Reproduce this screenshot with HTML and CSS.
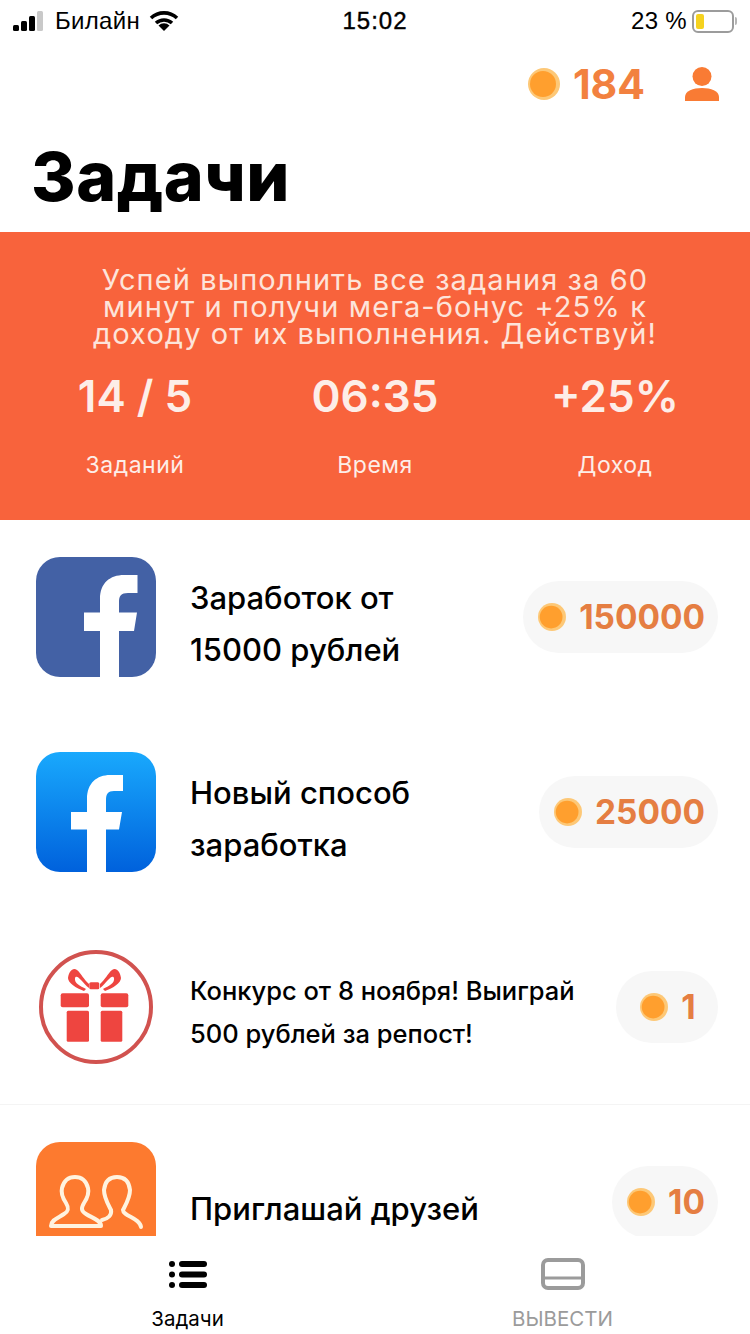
FILE: index.html
```html
<!DOCTYPE html>
<html lang="ru">
<head>
    <meta charset="UTF-8">
    <meta name="viewport" content="width=device-width, initial-scale=1.0">
    <title>Задачи</title>
    <link rel="stylesheet" href="styles.css">
</head>
<body>
    <svg class="defs" width="0" height="0">
        <symbol id="coin" viewBox="0 0 32 32">
            <circle cx="16" cy="16" r="16" fill="#fdc877"/>
            <circle cx="15" cy="16" r="13" fill="#ff9f2e"/>
        </symbol>
    </svg>

    <div class="status-bar">
        <div class="status-left">
            <svg class="signal" width="34" height="22" viewBox="0 0 34 22">
                <rect x="0" y="15" width="6" height="6" rx="1.5" fill="#000"/>
                <rect x="8" y="11" width="6" height="10" rx="1.5" fill="#000"/>
                <rect x="16" y="6" width="6" height="15" rx="1.5" fill="#000"/>
                <rect x="24" y="1" width="6" height="20" rx="1.5" fill="#c9c9c9"/>
            </svg>
            <span>Билайн</span>
            <svg class="wifi" width="30" height="22" viewBox="0 0 30 22">
                <path d="M2 8 A19 19 0 0 1 28 8" fill="none" stroke="#000" stroke-width="3.6"/>
                <path d="M7 13 A12 12 0 0 1 23 13" fill="none" stroke="#000" stroke-width="3.6"/>
                <path d="M15 21 L9.5 15.5 A8 8 0 0 1 20.5 15.5 Z" fill="#000"/>
            </svg>
        </div>
        <div class="status-time">15:02</div>
        <div class="status-right">
            <span>23 %</span>
            <div class="battery"><div class="battery-level"></div></div>
            <div class="battery-nub"></div>
        </div>
    </div>

    <div class="top-row">
        <svg class="coin-big"><use href="#coin"/></svg>
        <span class="balance">184</span>
        <svg class="user-icon" width="36" height="34" viewBox="0 0 36 34">
            <circle cx="18" cy="9.500" r="9.500" fill="#f97b34"/>
            <path d="M1 34 V30 C1 24 9 21 18 21 C27 21 35 24 35 30 V34 Z" fill="#f97b34"/>
        </svg>
    </div>

    <h1 class="page-title">Задачи</h1>

    <div class="banner">
        <p class="banner-text">Успей выполнить все задания за 60 минут и получи мега-бонус +25% к доходу от их выполнения. Действуй!</p>
        <div class="banner-stats">
            <div class="stat">
                <div class="stat-value">14 / 5</div>
                <div class="stat-label">Заданий</div>
            </div>
            <div class="stat">
                <div class="stat-value">06:35</div>
                <div class="stat-label">Время</div>
            </div>
            <div class="stat">
                <div class="stat-value">+25%</div>
                <div class="stat-label">Доход</div>
            </div>
        </div>
    </div>

    <div class="task-list">
        <div class="task">
            <svg class="task-icon" viewBox="0 0 120 120">
                <rect width="120" height="120" rx="24" fill="#4361a5"/>
                <path d="M64 120 V74 H48 V55.500 H64 V42 C64 26 74 18 88 18 H101.500 V36 H92 C85 36 83 39 83 45 V55.500 H101 L98 74 H83 V120 Z" fill="#fff"/>
            </svg>
            <div class="task-title">Заработок от<br>15000 рублей</div>
            <div class="reward">
                <svg class="coin-small"><use href="#coin"/></svg>
                <span>150000</span>
            </div>
        </div>
        <div class="task">
            <svg class="task-icon" viewBox="0 0 120 120">
                <defs>
                    <linearGradient id="fb-blue" x1="0" y1="0" x2="0" y2="1">
                        <stop offset="0" stop-color="#19a9fd"/>
                        <stop offset="1" stop-color="#0061dc"/>
                    </linearGradient>
                </defs>
                <rect width="120" height="120" rx="24" fill="url(#fb-blue)"/>
                <path d="M51 120 V77.500 H35 V60 H51 V47 C51 31 61 23 74 23 H87 V39 H78 C72 39 70 42 70 48 V60 H86 L83 77.500 H70 V120 Z" fill="#fff"/>
            </svg>
            <div class="task-title">Новый способ<br>заработка</div>
            <div class="reward">
                <svg class="coin-small"><use href="#coin"/></svg>
                <span>25000</span>
            </div>
        </div>
        <div class="task task-divided">
            <svg class="task-icon" viewBox="0 0 120 120">
                <circle cx="60" cy="60" r="55" fill="#fff" stroke="#d1524f" stroke-width="4"/>
                <rect x="24.700" y="46.300" width="28.300" height="14" rx="2" fill="#ee4540"/>
                <rect x="64.700" y="46.300" width="27.600" height="14" rx="2" fill="#ee4540"/>
                <rect x="30.700" y="63.700" width="22.300" height="31" rx="1.500" fill="#ee4540"/>
                <rect x="64.700" y="63.700" width="21.600" height="31" rx="1.500" fill="#ee4540"/>
                <rect x="53.300" y="35.300" width="10" height="7" rx="1.500" fill="#ee4540"/>
                <path d="M53 37 C48 33 45 26 41 23 C37 20 33 24 32 31 C32 36 40 41 48 44 L50 42 C44 39 38 36 39 31 C40 28 43 31 45 33 C47 35 50 39 53 41 Z" fill="#ee4540"/>
                <path d="M64 37 C69 33 72 26 76 23 C80 20 84 24 85 31 C85 36 77 41 69 44 L67 42 C73 39 79 36 78 31 C77 28 74 31 72 33 C70 35 67 39 64 41 Z" fill="#ee4540"/>
            </svg>
            <div class="task-title task-title-small">Конкурс от 8 ноября! Выиграй 500 рублей за репост!</div>
            <div class="reward">
                <svg class="coin-small"><use href="#coin"/></svg>
                <span>1</span>
            </div>
        </div>
        <div class="task">
            <svg class="task-icon" viewBox="0 0 120 120">
                <rect width="120" height="120" rx="24" fill="#fd7a2f"/>
                <path d="M15 84 C15 78 22 76 28 72 C33 69 33 66 30 61 C26 55 25 50 26 46 C28 38 33 35 39 35 C45 35 50 38 52 46 C53 50 52 55 48 61 C45 66 45 69 50 72 C56 76 65 78 65 84 Z" fill="none" stroke="#fff3df" stroke-width="4" stroke-linejoin="round"/>
                <path d="M66 78 C72 77 76 73 75 68 C73 64 68 56 68 48 C69 39 74 35 81 35 C88 35 93 39 94 48 C94 56 89 64 87 68 C87 74 104 76 105 85" fill="none" stroke="#fff3df" stroke-width="4" stroke-linecap="round"/>
            </svg>
            <div class="task-title">Приглашай друзей</div>
            <div class="reward">
                <svg class="coin-small"><use href="#coin"/></svg>
                <span>10</span>
            </div>
        </div>
    </div>

    <div class="tab-bar">
        <div class="tab">
            <svg class="tab-icon" width="38" height="32" viewBox="0 0 38 32">
                <circle cx="3" cy="6" r="3" fill="#000"/>
                <circle cx="3" cy="16.500" r="3" fill="#000"/>
                <circle cx="3" cy="27" r="3" fill="#000"/>
                <rect x="10" y="3" width="28" height="6" rx="3" fill="#000"/>
                <rect x="10" y="13.500" width="28" height="6" rx="3" fill="#000"/>
                <rect x="10" y="24" width="28" height="6" rx="3" fill="#000"/>
            </svg>
            <div class="tab-label">Задачи</div>
        </div>
        <div class="tab tab-muted">
            <svg class="tab-icon" width="44" height="32" viewBox="0 0 44 32">
                <rect x="2" y="2" width="40" height="28" rx="5" fill="none" stroke="#9b9b9b" stroke-width="4"/>
                <rect x="2" y="18.500" width="40" height="3" fill="#9b9b9b"/>
            </svg>
            <div class="tab-label">ВЫВЕСТИ</div>
        </div>
    </div>
</body>
</html>
```

FILE: styles.css
```css
* {
    box-sizing: border-box;
}
html, body {
    height: 100%;
}
body {
    font-family: Inter, "Noto Sans", sans-serif;
    background-color: #fff;
    color: #000;
    margin: 0;
    height: 1334px;
    overflow: hidden;
    display: flex;
    flex-direction: column;
}
.defs {
    position: absolute;
}

/* status bar */
.status-bar {
    height: 42px;
    flex-shrink: 0;
    display: flex;
    align-items: center;
    font-size: 24px;
    padding: 0 13px;
    font-family: "Liberation Sans", sans-serif;
}
.status-left, .status-right {
    flex: 1;
    display: flex;
    align-items: center;
}
.status-left span {
    margin-left: 8px;
    letter-spacing: 0.3px;
}
.wifi {
    margin-left: 9px;
}
.status-time {
    font-weight: 500;
    letter-spacing: 1px;
    -webkit-text-stroke: 0.4px #000;
}
.status-right {
    justify-content: flex-end;
}
.status-right span {
    letter-spacing: 0.3px;
}
.battery {
    width: 42px;
    height: 23px;
    margin-left: 5px;
    border: 2px solid #9c9c9c;
    border-radius: 6px;
    padding: 2px;
}
.battery-level {
    width: 8px;
    height: 100%;
    background-color: #f5d21f;
    border-radius: 2px;
}
.battery-nub {
    width: 2px;
    height: 8px;
    margin-left: 1px;
    background-color: #b5b5b5;
    border-radius: 0 2px 2px 0;
}

/* header */
.top-row {
    height: 84px;
    flex-shrink: 0;
    display: flex;
    align-items: center;
    justify-content: flex-end;
    padding-right: 30px;
}
.coin-big {
    width: 32px;
    height: 32px;
}
.balance {
    margin-left: 13px;
    font-size: 41px;
    font-weight: 700;
    color: #f2813f;
}
.user-icon {
    margin-left: 39px;
}
.page-title {
    margin: 0;
    height: 106px;
    flex-shrink: 0;
    padding-left: 31px;
    font-size: 68px;
    font-weight: 800;
    letter-spacing: 0.5px;
    line-height: 100px;
}

/* orange banner */
.banner {
    height: 288px;
    flex-shrink: 0;
    background-color: #f8633c;
    color: #fdeee8;
    padding: 34px 15px 0;
}
.banner-text {
    margin: 0 auto;
    width: 600px;
    text-align: center;
    font-size: 29px;
    letter-spacing: 1.1px;
    line-height: 27px;
    color: #fde4da;
}
.banner-stats {
    display: grid;
    grid-template-columns: repeat(3, 1fr);
    margin-top: 21px;
}
.stat {
    text-align: center;
}
.stat-value {
    font-size: 44px;
    font-weight: 600;
    line-height: 56px;
}
.stat-label {
    margin-top: 28px;
    font-size: 23px;
    letter-spacing: 0.5px;
    line-height: 26px;
}

/* tasks */
.task-list {
    flex: 1;
    min-height: 0;
    overflow: hidden;
}
.task {
    height: 195px;
    display: flex;
    align-items: center;
    padding: 37px 32px 38px 36px;
}
.task-divided {
    border-bottom: 1px solid #f4f4f4;
}
.task-icon {
    width: 120px;
    height: 120px;
    flex-shrink: 0;
}
.task-title {
    flex: 1;
    margin-left: 34px;
    padding-top: 13px;
    font-size: 31px;
    font-weight: 500;
    line-height: 52px;
}
.task-title-small {
    padding-top: 10px;
    font-size: 25.500px;
    line-height: 43px;
}
.reward {
    height: 72px;
    min-width: 102px;
    flex-shrink: 0;
    display: flex;
    align-items: center;
    justify-content: center;
    padding: 0 13px 0 15px;
    background-color: #f7f7f7;
    border-radius: 36px;
    color: #e57e42;
    font-size: 33.400px;
    font-weight: 700;
}
.coin-small {
    width: 28px;
    height: 28px;
    margin-right: 13px;
}

/* bottom tabs */
.tab-bar {
    height: 98px;
    flex-shrink: 0;
    background-color: #fff;
    display: flex;
}
.tab {
    flex: 1;
    display: flex;
    flex-direction: column;
    align-items: center;
    padding-top: 22px;
}
.tab-label {
    margin-top: 17px;
    font-size: 20.500px;
    line-height: 24px;
}
.tab-muted {
    color: #9b9b9b;
}
```
